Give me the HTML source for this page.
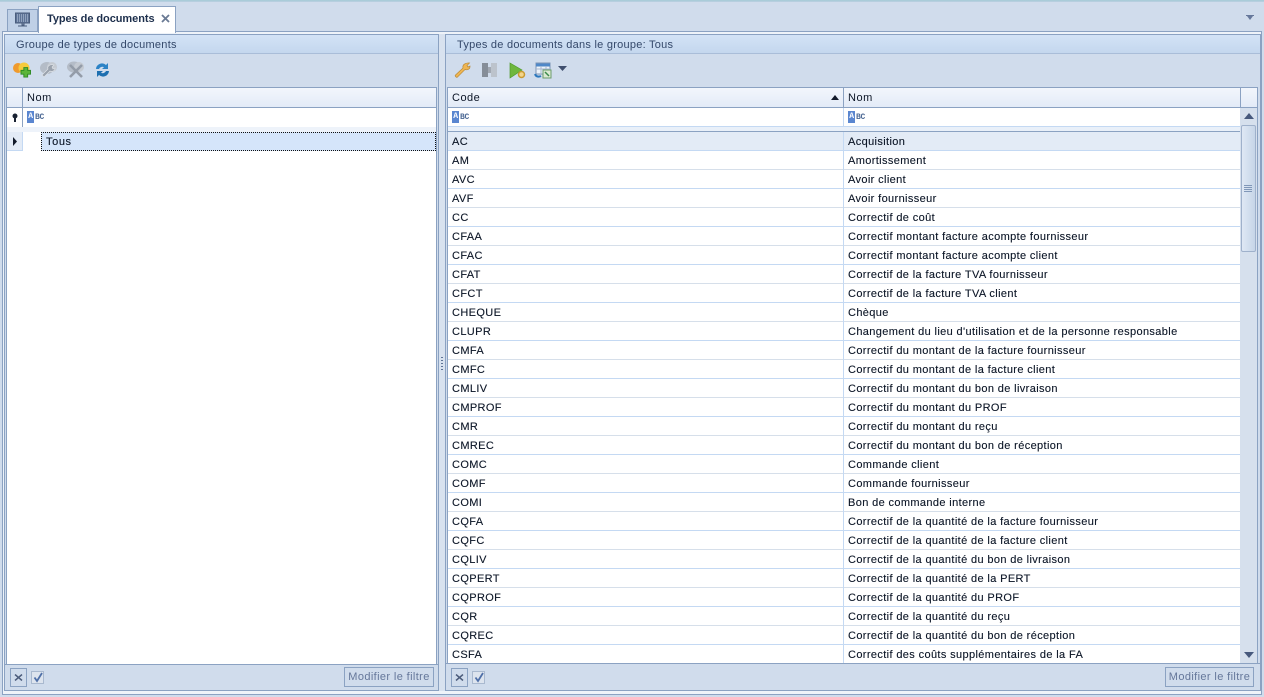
<!DOCTYPE html>
<html><head><meta charset="utf-8"><style>
html,body{margin:0;padding:0}
body{width:1264px;height:697px;overflow:hidden;position:relative;background:#d0dcec;font-family:"Liberation Sans",sans-serif;font-size:11px;color:#0b1526;letter-spacing:.37px}
div,svg{position:absolute;box-sizing:border-box}
.t{white-space:nowrap;line-height:14px}
.title{color:#34486a;letter-spacing:.26px}
.panel{background:#d0dcec;border:1px solid #8ba2c2}
.tb{background:linear-gradient(#d3e3f6,#c4d7ee);border-bottom:1px solid #a9bdd8}
.hd{background:linear-gradient(#f2f6fc,#e3ebf7);border:1px solid #8ba2c2}
.r{left:0;height:19px;border-bottom:1px solid #c4d9f3;width:792px;background:#fff}
.r:nth-child(even){border-bottom-color:#d6dfea}
.r span{position:absolute;top:3px;white-space:nowrap;line-height:14px;-webkit-text-stroke:.12px #0b1526}
.r span:first-child{left:4px}
.r span:last-child{left:400px}
.btn{border:1px solid #8ba2c2;background:#d0dcec;color:#65779a;text-align:center;line-height:19px;letter-spacing:.38px;white-space:nowrap;font-size:11px}
.abc{font:bold 8px "Liberation Mono",monospace;letter-spacing:-.3px;color:#4f6b96;white-space:nowrap}
.abc b{display:inline-block;width:7px;height:12px;background:#5a86d0;color:#fff;text-align:center;line-height:12px;font-weight:bold;margin-right:1px;vertical-align:middle}
</style></head><body>
<div style="left:0;top:0;width:1264px;height:2px;background:linear-gradient(#a3cbd6,#bcd0e2)"></div>

<!-- tabs -->
<div style="left:7px;top:9px;width:31px;height:23px;background:#bfd0e6;border:1px solid #8ba2c2;border-bottom:0"></div>
<svg style="left:14px;top:12px" width="18" height="16" viewBox="0 0 18 16"><rect x="1.500" y="1" width="14" height="10" fill="#5d7396" stroke="#4a5d7c"/><path d="M3 3h11M3 5h11M3 7h11M3 9h11" stroke="#c2d0e4" stroke-dasharray="1 1"/><path d="M8 11v2h2v-2zM4 14h9" stroke="#4a5d7c" fill="#9aabc4"/></svg>
<div style="left:2px;top:31px;width:1260px;height:664px;border:1px solid #8ba2c2;background:#eef3f9"></div>
<div style="left:38px;top:6px;width:138px;height:27px;background:#fff;border:1px solid #8ba2c2;border-bottom:0"></div>
<div class="t" style="left:47px;top:12px;font-weight:bold;color:#1d2f4c;letter-spacing:-.06px">Types de documents</div>
<svg style="left:160px;top:13px" width="11" height="11" viewBox="0 0 11 11"><path d="M2 2l7 7M9 2l-7 7" stroke="#6a7a94" stroke-width="1.800"/></svg>
<svg style="left:1245px;top:15px" width="10" height="7" viewBox="0 0 10 7"><path d="M1 0h8v1H1zM2 1h6L5 5z" fill="#66789b"/></svg>

<!-- left panel -->
<div class="panel" style="left:4px;top:34px;width:435px;height:657px"></div>
<div class="tb" style="left:5px;top:35px;width:433px;height:19px"></div>
<div class="t title" style="left:16px;top:38px">Groupe de types de documents</div>
<svg style="left:12px;top:60px" width="20" height="20" viewBox="0 0 20 20"><circle cx="6" cy="8" r="5" fill="#ef9a2e"/><circle cx="12" cy="8" r="5.500" fill="#f7cb3c"/><path d="M13 9h4v3h3v4h-3v3h-4v-3h-3v-4h3z" transform="translate(-.5 -1) scale(.95)" fill="#5bb53a" stroke="#2d8a24"/></svg>
<svg style="left:39px;top:60px" width="20" height="20" viewBox="0 0 20 20"><ellipse cx="8" cy="8" rx="7" ry="6" fill="#b4bcc7"/><circle cx="13" cy="7" r="5" fill="#c4cad2"/><path d="M15 5l-2 2 1 2 2-1c0 3-3 4-5 3l-6 6-2-2 6-6c-1-3 2-5 6-4z" fill="#9aa2ad" stroke="#e1e5ea" stroke-width=".6"/></svg>
<svg style="left:66px;top:60px" width="20" height="20" viewBox="0 0 20 20"><ellipse cx="8" cy="7" rx="7" ry="5.500" fill="#b4bcc7"/><circle cx="13" cy="7" r="5" fill="#c4cad2"/><path d="M4 5l12 12M16 5L4 17" stroke="#949ca8" stroke-width="2.600"/></svg>
<svg style="left:95px;top:62px" width="15" height="16" viewBox="0 0 15 16"><path d="M1 7a6 6 0 0 1 10-4L13 1v6H7l2-1.700A3.500 3.500 0 0 0 4 7z" fill="#2c83c6"/><path d="M14 9a6 6 0 0 1-10 4L2 15V9h6l-2 1.700A3.500 3.500 0 0 0 11 9z" fill="#1d6fb0"/></svg>

<div style="left:6px;top:87px;width:431px;height:578px;background:#fff;border:1px solid #8ba2c2;border-top:0;border-bottom:0"></div>
<div class="hd" style="left:6px;top:87px;width:431px;height:21px"></div>
<div style="left:22px;top:88px;width:1px;height:39px;background:#8ba2c2"></div>
<div class="t" style="left:27px;top:91px;letter-spacing:.55px">Nom</div>
<svg style="left:11px;top:113px" width="8" height="10" viewBox="0 0 8 10"><circle cx="4" cy="3" r="2.500" fill="#1a2333"/><path d="M3 5h2v4H3z" fill="#1a2333"/></svg>
<div class="abc" style="left:27px;top:111px;line-height:12px"><b>A</b>BC</div>
<div style="left:7px;top:127px;width:429px;height:5px;background:#eef3fa"></div>
<div style="left:7px;top:132px;width:15px;height:19px;background:#e3ebf6;border-right:1px solid #c4d9f3;border-bottom:1px solid #c4d9f3;width:16px"></div>
<svg style="left:12px;top:137px" width="6" height="9" viewBox="0 0 6 9"><path d="M1 0l4 4.500L1 9z" fill="#121a2a"/></svg>
<div style="left:41px;top:132px;width:395px;height:19px;background:#d5e5fa;border:1px dotted #111"></div>
<div class="t" style="left:46px;top:135px;letter-spacing:.6px;-webkit-text-stroke:.12px #0b1526">Tous</div>
<div style="left:5px;top:664px;width:433px;height:26px;background:#d0dcec;border-top:1px solid #8ba2c2"></div>
<div class="btn" style="left:10px;top:668px;width:17px;height:19px"></div>
<svg style="left:14px;top:674px" width="9" height="7" viewBox="0 0 9 7"><path d="M1 .5l7 6M8 .5l-7 6" stroke="#4d5d7c" stroke-width="1.500"/></svg>
<div style="left:31px;top:671px;width:13px;height:13px;border:1px solid #a9b9cf;background:#dde4ee"></div>
<svg style="left:32px;top:672px" width="12" height="11" viewBox="0 0 12 11"><path d="M2.500 5.500l2.500 3.500L10 1" fill="none" stroke="#4f70a8" stroke-width="1.800"/></svg>
<div class="btn" style="left:344px;top:667px;width:90px;height:20px">Modifier le filtre</div>

<!-- splitter -->
<div style="left:439px;top:34px;width:6px;height:657px;background:#d8e2ef"></div>
<svg style="left:440px;top:356px" width="4" height="16" viewBox="0 0 4 16"><path d="M1 1h2v1H1zM1 4h2v1H1zM1 7h2v1H1zM1 10h2v1H1zM1 13h2v1H1z" fill="#5f7496"/></svg>

<!-- right panel -->
<div class="panel" style="left:445px;top:34px;width:816px;height:657px"></div>
<div class="tb" style="left:446px;top:35px;width:814px;height:19px"></div>
<div class="t title" style="left:457px;top:38px;letter-spacing:.25px">Types de documents dans le groupe: Tous</div>
<svg style="left:454px;top:61px" width="17" height="18" viewBox="0 0 17 18"><path d="M15.500 2l-2.500 2.500L14 6l2-1c.3 3-2.500 4.500-5 3.500L3.500 16c-1 1-3-1-2-2L9 7c-.8-3 2-5.500 6.500-5z" fill="#efb653" stroke="#b98a39" stroke-width=".7"/></svg>
<svg style="left:481px;top:62px" width="17" height="16" viewBox="0 0 17 16"><path d="M1 1h6v14H1z" fill="#858d98"/><path d="M7 5h3v6H7z" fill="#a1a8b2"/><path d="M10 1h6v14h-6z" fill="#bcc3cc"/></svg>
<svg style="left:509px;top:62px" width="17" height="17" viewBox="0 0 17 17"><path d="M1 1l12 7-12 8z" fill="#6fb73e" stroke="#4f9a2c" stroke-width=".7"/><circle cx="12.500" cy="12.500" r="3" fill="#f4d58a" stroke="#c99b32" stroke-width="1.500"/></svg>
<svg style="left:534px;top:62px" width="18" height="17" viewBox="0 0 18 17"><rect x="2" y="1" width="14" height="11" fill="#eef3f9" stroke="#7c93b5"/><path d="M2 1.500h14v3H2z" fill="#4f88c8"/><path d="M2 7h14M7 4v8M12 4v8" stroke="#a6b7ce"/><rect x="9" y="8" width="8" height="8" fill="#dbe9d2" stroke="#6b9c6b"/><path d="M11 10l4 4" stroke="#3c8a4a" stroke-width="1.500"/><path d="M1 12c1 3 4 3 6 2" fill="none" stroke="#2c78bd" stroke-width="2"/></svg>
<svg style="left:558px;top:66px" width="9" height="6" viewBox="0 0 9 6"><path d="M0 0h9L4.500 5z" fill="#3f4f6e"/></svg>

<div style="left:447px;top:87px;width:811px;height:577px;background:#fff;border:1px solid #8ba2c2;border-top:0;border-bottom:0"></div>
<div class="hd" style="left:447px;top:87px;width:811px;height:21px"></div>
<div style="left:843px;top:88px;width:1px;height:19px;background:#8ba2c2"></div>
<div style="left:1240px;top:88px;width:1px;height:19px;background:#8ba2c2"></div>
<div class="t" style="left:452px;top:91px;letter-spacing:.5px">Code</div>
<svg style="left:831px;top:95px" width="8" height="5" viewBox="0 0 8 5"><path d="M4 0l4 5H0z" fill="#121a2a"/></svg>
<div class="t" style="left:848px;top:91px;letter-spacing:.55px">Nom</div>
<div class="abc" style="left:452px;top:111px;line-height:12px"><b>A</b>BC</div>
<div class="abc" style="left:848px;top:111px;line-height:12px"><b>A</b>BC</div>
<div style="left:448px;top:126px;width:792px;height:5px;background:#e9f0f9;border-top:1px solid #c4d9f3"></div>
<div style="left:448px;top:131px;width:792px;height:1px;background:#8ba2c2"></div>
<div style="left:843px;top:108px;width:1px;height:18px;background:#c4d9f3"></div>

<div style="left:448px;top:132px;width:792px;height:532px;overflow:hidden">
<div class="r" style="top:0;background:#e3ebf6"><span>AC</span><span>Acquisition</span></div>
<div class="r" style="top:19px"><span>AM</span><span>Amortissement</span></div>
<div class="r" style="top:38px"><span>AVC</span><span>Avoir client</span></div>
<div class="r" style="top:57px"><span>AVF</span><span>Avoir fournisseur</span></div>
<div class="r" style="top:76px"><span>CC</span><span>Correctif de coût</span></div>
<div class="r" style="top:95px"><span>CFAA</span><span>Correctif montant facture acompte fournisseur</span></div>
<div class="r" style="top:114px"><span>CFAC</span><span>Correctif montant facture acompte client</span></div>
<div class="r" style="top:133px"><span>CFAT</span><span>Correctif de la facture TVA fournisseur</span></div>
<div class="r" style="top:152px"><span>CFCT</span><span>Correctif de la facture TVA client</span></div>
<div class="r" style="top:171px"><span>CHEQUE</span><span>Chèque</span></div>
<div class="r" style="top:190px"><span>CLUPR</span><span>Changement du lieu d'utilisation et de la personne responsable</span></div>
<div class="r" style="top:209px"><span>CMFA</span><span>Correctif du montant de la facture fournisseur</span></div>
<div class="r" style="top:228px"><span>CMFC</span><span>Correctif du montant de la facture client</span></div>
<div class="r" style="top:247px"><span>CMLIV</span><span>Correctif du montant du bon de livraison</span></div>
<div class="r" style="top:266px"><span>CMPROF</span><span>Correctif du montant du PROF</span></div>
<div class="r" style="top:285px"><span>CMR</span><span>Correctif du montant du reçu</span></div>
<div class="r" style="top:304px"><span>CMREC</span><span>Correctif du montant du bon de réception</span></div>
<div class="r" style="top:323px"><span>COMC</span><span>Commande client</span></div>
<div class="r" style="top:342px"><span>COMF</span><span>Commande fournisseur</span></div>
<div class="r" style="top:361px"><span>COMI</span><span>Bon de commande interne</span></div>
<div class="r" style="top:380px"><span>CQFA</span><span>Correctif de la quantité de la facture fournisseur</span></div>
<div class="r" style="top:399px"><span>CQFC</span><span>Correctif de la quantité de la facture client</span></div>
<div class="r" style="top:418px"><span>CQLIV</span><span>Correctif de la quantité du bon de livraison</span></div>
<div class="r" style="top:437px"><span>CQPERT</span><span>Correctif de la quantité de la PERT</span></div>
<div class="r" style="top:456px"><span>CQPROF</span><span>Correctif de la quantité du PROF</span></div>
<div class="r" style="top:475px"><span>CQR</span><span>Correctif de la quantité du reçu</span></div>
<div class="r" style="top:494px"><span>CQREC</span><span>Correctif de la quantité du bon de réception</span></div>
<div class="r" style="top:513px;border-bottom:0"><span>CSFA</span><span>Correctif des coûts supplémentaires de la FA</span></div>
<div style="left:395px;top:0;width:1px;height:532px;background:#c4d9f3"></div>
</div>

<!-- scrollbar -->
<div style="left:1240px;top:108px;width:17px;height:556px;background:#d6e0ed"></div>
<svg style="left:1244px;top:113px" width="10" height="6" viewBox="0 0 10 6"><path d="M5 0l5 6H0z" fill="#47597d"/></svg>
<div style="left:1241px;top:125px;width:15px;height:127px;background:linear-gradient(90deg,#dfe8f4,#c6d5e8);border:1px solid #9fb1cb;border-radius:2px"></div>
<svg style="left:1244px;top:185px" width="9" height="8" viewBox="0 0 9 8"><path d="M0 .5h8M0 2.500h8M0 4.500h8M0 6.500h8" stroke="#8097b8"/></svg>
<svg style="left:1244px;top:652px" width="10" height="6" viewBox="0 0 10 6"><path d="M0 0h10L5 6z" fill="#47597d"/></svg>

<div style="left:446px;top:663px;width:814px;height:27px;background:#d0dcec;border-top:1px solid #8ba2c2"></div>
<div class="btn" style="left:451px;top:668px;width:17px;height:19px"></div>
<svg style="left:455px;top:674px" width="9" height="7" viewBox="0 0 9 7"><path d="M1 .5l7 6M8 .5l-7 6" stroke="#4d5d7c" stroke-width="1.500"/></svg>
<div style="left:472px;top:671px;width:13px;height:13px;border:1px solid #a9b9cf;background:#dde4ee"></div>
<svg style="left:473px;top:672px" width="12" height="11" viewBox="0 0 12 11"><path d="M2.500 5.500l2.500 3.500L10 1" fill="none" stroke="#4f70a8" stroke-width="1.800"/></svg>
<div class="btn" style="left:1165px;top:667px;width:89px;height:20px">Modifier le filtre</div>
</body></html>
